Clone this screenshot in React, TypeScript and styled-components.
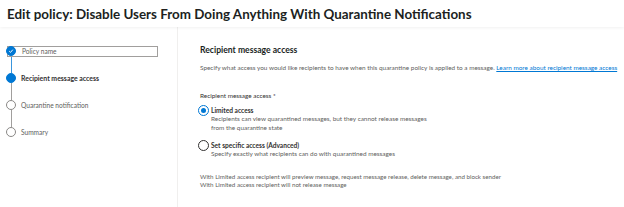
import * as React from "react";
import styled, { createGlobalStyle } from "styled-components";

const GlobalStyle = createGlobalStyle`
    html, body {
        margin: 0;
        padding: 0;
        background: #ffffff;
        font-family: Lato, "Open Sans", sans-serif;
        color: #323130;
    }
`;

interface Step {
    label: string;
    state: "done" | "current" | "todo";
}

const steps: Step[] = [
    { label: "Policy name", state: "done" },
    { label: "Recipient message access", state: "current" },
    { label: "Quarantine notification", state: "todo" },
    { label: "Summary", state: "todo" },
];

const Page = styled.div`
    width: 624px;
    height: 207px;
    overflow: hidden;
    display: flex;
    flex-direction: column;
`;

const Header = styled.div`
    height: 27px;
    padding-left: 7px;
    display: flex;
    align-items: center;
    box-shadow: 0 1px 3px rgba(0, 0, 0, 0.06);
    position: relative;
    z-index: 1;
`;

const Title = styled.h1`
    margin: 0;
    font-size: 13.4px;
    font-weight: 700;
    color: #201f1e;
    white-space: nowrap;
`;

const Body = styled.div`
    flex: 1;
    display: flex;
`;

const Nav = styled.div`
    width: 178px;
    border-right: 1px solid #f0efee;
    padding: 19px 0 0 6px;
    box-sizing: border-box;
`;

const StepRow = styled.div`
    display: flex;
    height: 27px;
`;

const Track = styled.div`
    width: 10px;
    display: flex;
    flex-direction: column;
    align-items: center;
`;

const Dot = styled.div<{ $state: Step["state"] }>`
    width: 10px;
    height: 10px;
    border-radius: 50%;
    box-sizing: border-box;
    flex: none;
    display: flex;
    align-items: center;
    justify-content: center;
    position: relative;
    z-index: 1;
    background: ${(p) => (p.$state === "todo" ? "#ffffff" : "#0078d4")};
    border: 1px solid ${(p) => (p.$state === "todo" ? "#8a8886" : "#0078d4")};
`;

const Line = styled.div<{ $active: boolean }>`
    width: 1px;
    flex: 1;
    background: ${(p) => (p.$active ? "#3a96dd" : "#a19f9d")};
`;

const StepLabel = styled.div<{ $state: Step["state"]; $boxed: boolean }>`
    height: 9px;
    line-height: 9px;
    margin-left: ${(p) => (p.$boxed ? "-9px" : "5px")};
    padding-left: ${(p) => (p.$boxed ? "14px" : "0")};
    width: ${(p) => (p.$boxed ? "135px" : "auto")};
    border: ${(p) => (p.$boxed ? "1px solid #a19f9d" : "none")};
    margin-top: ${(p) => (p.$boxed ? "-0.5px" : "0.5px")};
    font-size: ${(p) => (p.$state === "current" ? "6.9px" : "6.6px")};
    font-weight: ${(p) => (p.$state === "current" ? 700 : 400)};
    color: ${(p) => (p.$state === "current" ? "#323130" : "#605e5c")};
`;

const Main = styled.div`
    flex: 1;
    padding: 16px 0 0 22px;
`;

const Heading = styled.h2`
    margin: 0;
    font-size: 8.6px;
    font-weight: 700;
    color: #201f1e;
    line-height: 14px;
`;

const Text = styled.p<{ $small?: boolean }>`
    margin: 0;
    font-size: ${(p) => (p.$small ? "6.2px" : "6.4px")};
    line-height: 8.5px;
    color: #605e5c;
    white-space: nowrap;
`;

const Intro = styled(Text)`
    margin-top: 7px;
`;

const Link = styled.a`
    color: #0078d4;
    text-decoration: underline;
`;

const FieldLabel = styled(Text)`
    margin-top: 19px;
    color: #323130;
`;

const Options = styled.div`
    margin-top: 5px;
    display: flex;
    flex-direction: column;
    gap: 8px;
`;

const Option = styled.div`
    display: flex;
    gap: 2px;
`;

const Radio = styled.div<{ $checked: boolean }>`
    width: 11px;
    height: 11px;
    flex: none;
    border-radius: 50%;
    box-sizing: border-box;
    border: 1px solid ${(p) => (p.$checked ? "#0078d4" : "#323130")};
    display: flex;
    align-items: center;
    justify-content: center;
    margin-left: -2px;
`;

const RadioDot = styled.div`
    width: 5px;
    height: 5px;
    border-radius: 50%;
    background: #0078d4;
`;

const OptionText = styled.div`
    display: flex;
    flex-direction: column;
    padding-top: 1px;
`;

const OptionTitle = styled.div`
    font-size: 6.6px;
    line-height: 9px;
    font-weight: 700;
    color: #323130;
`;

const Notes = styled.div`
    margin-top: 14px;
`;

const Check = () => (
    <svg width="6" height="6" viewBox="0 0 10 10">
        <path d="M2 5.2 L4.2 7.3 L8 2.8" fill="none" stroke="#ffffff" strokeWidth="1.6" />
    </svg>
);

const App = () => {
    return (
        <>
            <GlobalStyle />
            <Page>
                <Header>
                    <Title>Edit policy: Disable Users From Doing Anything With Quarantine Notifications</Title>
                </Header>
                <Body>
                    <Nav>
                        {steps.map((step, i) => (
                            <StepRow key={step.label}>
                                <Track>
                                    <Dot $state={step.state}>{step.state === "done" && <Check />}</Dot>
                                    {i < steps.length - 1 && <Line $active={step.state === "done"} />}
                                </Track>
                                <StepLabel $state={step.state} $boxed={i === 0}>
                                    {step.label}
                                </StepLabel>
                            </StepRow>
                        ))}
                    </Nav>
                    <Main>
                        <Heading>Recipient message access</Heading>
                        <Intro>
                            Specify what access you would like recipients to have when this quarantine policy is applied to a message.{" "}
                            <Link>Learn more about recipient message access</Link>
                        </Intro>
                        <FieldLabel>Recipient message access *</FieldLabel>
                        <Options>
                            <Option>
                                <Radio $checked>
                                    <RadioDot />
                                </Radio>
                                <OptionText>
                                    <OptionTitle>Limited access</OptionTitle>
                                    <Text>
                                        Recipients can view quarantined messages, but they cannot release messages
                                        <br />
                                        from the quarantine state
                                    </Text>
                                </OptionText>
                            </Option>
                            <Option>
                                <Radio $checked={false} />
                                <OptionText>
                                    <OptionTitle>Set specific access (Advanced)</OptionTitle>
                                    <Text>Specify exactly what recipients can do with quarantined messages</Text>
                                </OptionText>
                            </Option>
                        </Options>
                        <Notes>
                            <Text $small>With Limited access recipient will preview message, request message release, delete message, and block sender</Text>
                            <Text $small>With Limited access recipient will not release message</Text>
                        </Notes>
                    </Main>
                </Body>
            </Page>
        </>
    );
};

export default App;
